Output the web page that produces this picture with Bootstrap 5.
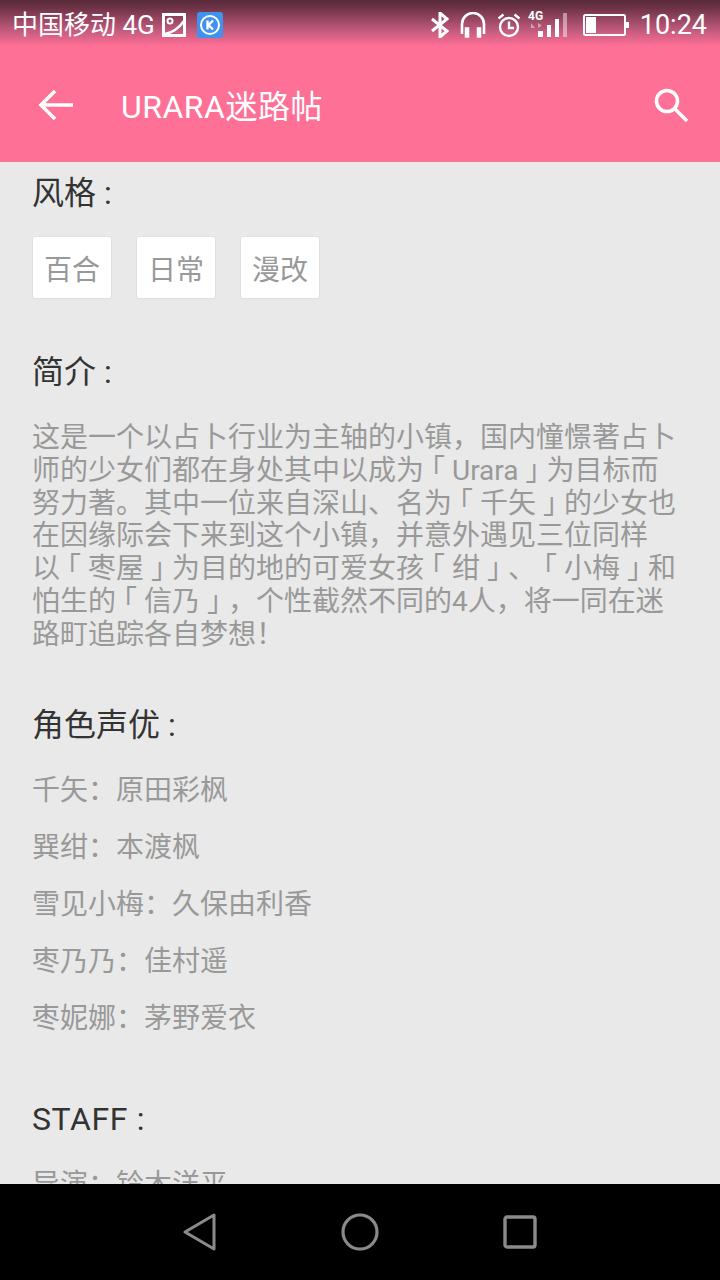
<!DOCTYPE html>
<html lang="zh-CN">
<head>
  <meta charset="UTF-8">
  <meta name="viewport" content="width=device-width, initial-scale=1">
  <title>URARA迷路帖</title>
  <link href="https://cdn.jsdelivr.net/npm/bootstrap@5.3.0/dist/css/bootstrap.min.css" rel="stylesheet">
  <style>
    html, body { height: 1280px; overflow: hidden; }
    body {
      background-color: #e9e9e9;
      font-family: Roboto, "Noto Sans CJK SC", sans-serif;
    }
    .app-frame { height: 1280px; width: 720px; }
    .app-head {
      height: 162px;
      flex-shrink: 0;
      color: #fff;
      background: linear-gradient(to bottom, #572a3a 0, #6e3347 8px, #c05a7c 30px, #ff7096 46px, #ff7096 100%);
    }
    .status-row { height: 48px; padding: 2px 13px 0 12px; font-size: 26px; line-height: 46px; }
    .status-row svg { display: block; flex-shrink: 0; }
    .clock-text { font-size: 27px; margin-left: 11px; }
    .gap-s { margin-left: 7px; }
    .gap-m { margin-left: 11px; }
    .gap-l { margin-left: 16px; }
    .tool-row { height: 114px; padding: 0 31px 0 38px; }
    .tool-title { font-size: 32px; margin-left: 47px; line-height: 1; padding-top: 4px; letter-spacing: .5px; }
    .page-body { flex: 1 1 0; min-height: 0; overflow: hidden; padding: 9px 32px 0; }
    .block-title { font-size: 32px; line-height: 44px; color: #333; margin: 0; font-weight: 400; }
    .tag-row { margin-top: 21px; gap: 24px; }
    .tag-chip {
      width: 80px; height: 63px;
      padding-top: 6px;
      background: #fff;
      border: 1px solid #e0e0e0;
      border-radius: 3px;
      color: #999;
      font-size: 28px;
    }
    .intro-title { margin-top: 51px; }
    .intro-text { font-size: 28px; line-height: 32.8px; color: #999; margin: 28px 0 0; }
    .intro-line { display: block; white-space: nowrap; }
    .quote-mark { display: inline-block; width: 1em; text-align: center; font-feature-settings: "halt"; }
    .cast-title { margin-top: 51px; }
    .cast-list { margin-top: 15px; }
    .staff-title { margin-top: 50px; letter-spacing: .6px; }
    .cast-line { font-size: 28px; line-height: 57px; color: #999; margin: 0; white-space: nowrap; }
    .soft-nav { height: 96px; flex-shrink: 0; background: #000; }
    .nav-cell { width: 160px; }
  </style>
</head>
<body>
  <div class="app-frame d-flex flex-column">
    <header class="app-head">
      <div class="status-row d-flex align-items-center justify-content-between">
        <div class="d-flex align-items-center">
          <span>中国移动 4G</span>
          <svg class="gap-s" width="24" height="24" viewBox="0 0 24 24" fill="none" stroke="#fff" stroke-width="3"><rect x="1.5" y="1.5" width="21" height="21"/><circle cx="8" cy="8" r="2.5" stroke-width="2"/><path d="M3 21 Q14 19 22 8" stroke-width="2.5"/></svg>
          <svg class="gap-m" width="26" height="26" viewBox="0 0 26 26"><rect width="26" height="26" rx="3" fill="#3f93ee"/><circle cx="13" cy="13" r="9" fill="none" stroke="#fff" stroke-width="2"/><path d="M10.5 8.5v9M16 8.5l-4.5 4.5 4.5 4.5" fill="none" stroke="#fff" stroke-width="2.4"/></svg>
        </div>
        <div class="d-flex align-items-center">
          <svg width="18" height="26" viewBox="0 0 18 26" fill="none" stroke="#fff" stroke-width="3"><path d="M1 7l15 12-7 6V1l7 6L1 19"/></svg>
          <svg class="gap-m" width="26" height="26" viewBox="0 0 26 26" fill="none" stroke="#fff" stroke-width="2.6"><path d="M2 22V12a11 11 0 0 1 22 0v10"/><path d="M5.500 16h3v9h-3zM17.500 16h3v9h-3z" fill="#fff" stroke-width="1.500"/></svg>
          <svg class="gap-m" width="24" height="26" viewBox="0 0 24 26" fill="none" stroke="#fff" stroke-width="2.400"><circle cx="12" cy="15" r="9"/><path d="M12 9.500V16h5M1.500 6.500l5-4M22.500 6.500l-5-4"/></svg>
          <svg class="gap-s" width="39" height="30" viewBox="0 0 39 30"><text x="0" y="10" fill="#fff" font-family="Roboto, sans-serif" font-size="12" font-weight="700">4G</text><path d="M3 13l4 5H3zM10 13v5l4-2.500z" fill="#fff" opacity=".45"/><rect x="10" y="21" width="5" height="6" fill="#fff"/><rect x="19" y="15" width="4" height="12" fill="#fff"/><rect x="27" y="9" width="4" height="18" fill="#fff"/><rect x="35" y="3" width="4" height="24" fill="#fff" opacity=".45"/></svg>
          <svg class="gap-l" width="46" height="24" viewBox="0 0 46 24"><rect x="1" y="2" width="41" height="20" rx="1.500" fill="none" stroke="#fff" stroke-width="2"/><rect x="3" y="4" width="10" height="16" fill="#fff"/><rect x="43" y="9" width="3" height="6" fill="#fff"/></svg>
          <span class="clock-text">10:24</span>
        </div>
      </div>
      <div class="tool-row d-flex align-items-center">
        <svg width="36" height="36" viewBox="0 0 36 36" fill="none" stroke="#fff" stroke-width="3.600"><path d="M35 18H3M17 4L3 18l14 14"/></svg>
        <span class="tool-title flex-grow-1">URARA迷路帖</span>
        <svg width="36" height="36" viewBox="0 0 36 36" fill="none" stroke="#fff" stroke-width="3.600"><circle cx="14" cy="14" r="10.500"/><path d="M21.500 21.500L34 34"/></svg>
      </div>
    </header>

    <main class="page-body">
      <h2 class="block-title">风格 :</h2>
      <div class="tag-row d-flex">
        <span class="tag-chip d-flex align-items-center justify-content-center">百合</span>
        <span class="tag-chip d-flex align-items-center justify-content-center">日常</span>
        <span class="tag-chip d-flex align-items-center justify-content-center">漫改</span>
      </div>

      <h2 class="block-title intro-title">简介 :</h2>
      <p class="intro-text">
        <span class="intro-line">这是一个以占卜行业为主轴的小镇，国内憧憬著占卜</span>
        <span class="intro-line">师的少女们都在身处其中以成为<span class="quote-mark">「</span>Urara<span class="quote-mark">」</span>为目标而</span>
        <span class="intro-line">努力著。其中一位来自深山、名为<span class="quote-mark">「</span>千矢<span class="quote-mark">」</span>的少女也</span>
        <span class="intro-line">在因缘际会下来到这个小镇，并意外遇见三位同样</span>
        <span class="intro-line">以<span class="quote-mark">「</span>枣屋<span class="quote-mark">」</span>为目的地的可爱女孩<span class="quote-mark">「</span>绀<span class="quote-mark">」</span>、<span class="quote-mark">「</span>小梅<span class="quote-mark">」</span>和</span>
        <span class="intro-line">怕生的<span class="quote-mark">「</span>信乃<span class="quote-mark">」</span>，个性截然不同的4人，将一同在迷</span>
        <span class="intro-line">路町追踪各自梦想！</span>
      </p>

      <h2 class="block-title cast-title">角色声优 :</h2>
      <div class="cast-list">
        <p class="cast-line">千矢：原田彩枫</p>
        <p class="cast-line">巽绀：本渡枫</p>
        <p class="cast-line">雪见小梅：久保由利香</p>
        <p class="cast-line">枣乃乃：佳村遥</p>
        <p class="cast-line">枣妮娜：茅野爱衣</p>
      </div>

      <h2 class="block-title staff-title">STAFF :</h2>
      <div class="cast-list">
        <p class="cast-line">导演：铃木洋平</p>
      </div>
    </main>

    <nav class="soft-nav d-flex align-items-center justify-content-center">
      <div class="nav-cell d-flex justify-content-center"><svg width="34" height="38" viewBox="0 0 34 38" fill="none" stroke="#8a8a8a" stroke-width="3" stroke-linejoin="round"><path d="M31 2v34L2 19z"/></svg></div>
      <div class="nav-cell d-flex justify-content-center"><svg width="38" height="38" viewBox="0 0 38 38" fill="none" stroke="#8a8a8a" stroke-width="3.200"><circle cx="19" cy="19" r="17"/></svg></div>
      <div class="nav-cell d-flex justify-content-center"><svg width="34" height="34" viewBox="0 0 34 34" fill="none" stroke="#8a8a8a" stroke-width="3.400" stroke-linejoin="round"><rect x="2" y="2" width="30" height="30" rx="2"/></svg></div>
    </nav>
  </div>
  <script src="https://cdn.jsdelivr.net/npm/bootstrap@5.3.0/dist/js/bootstrap.bundle.min.js"></script>
</body>
</html>
